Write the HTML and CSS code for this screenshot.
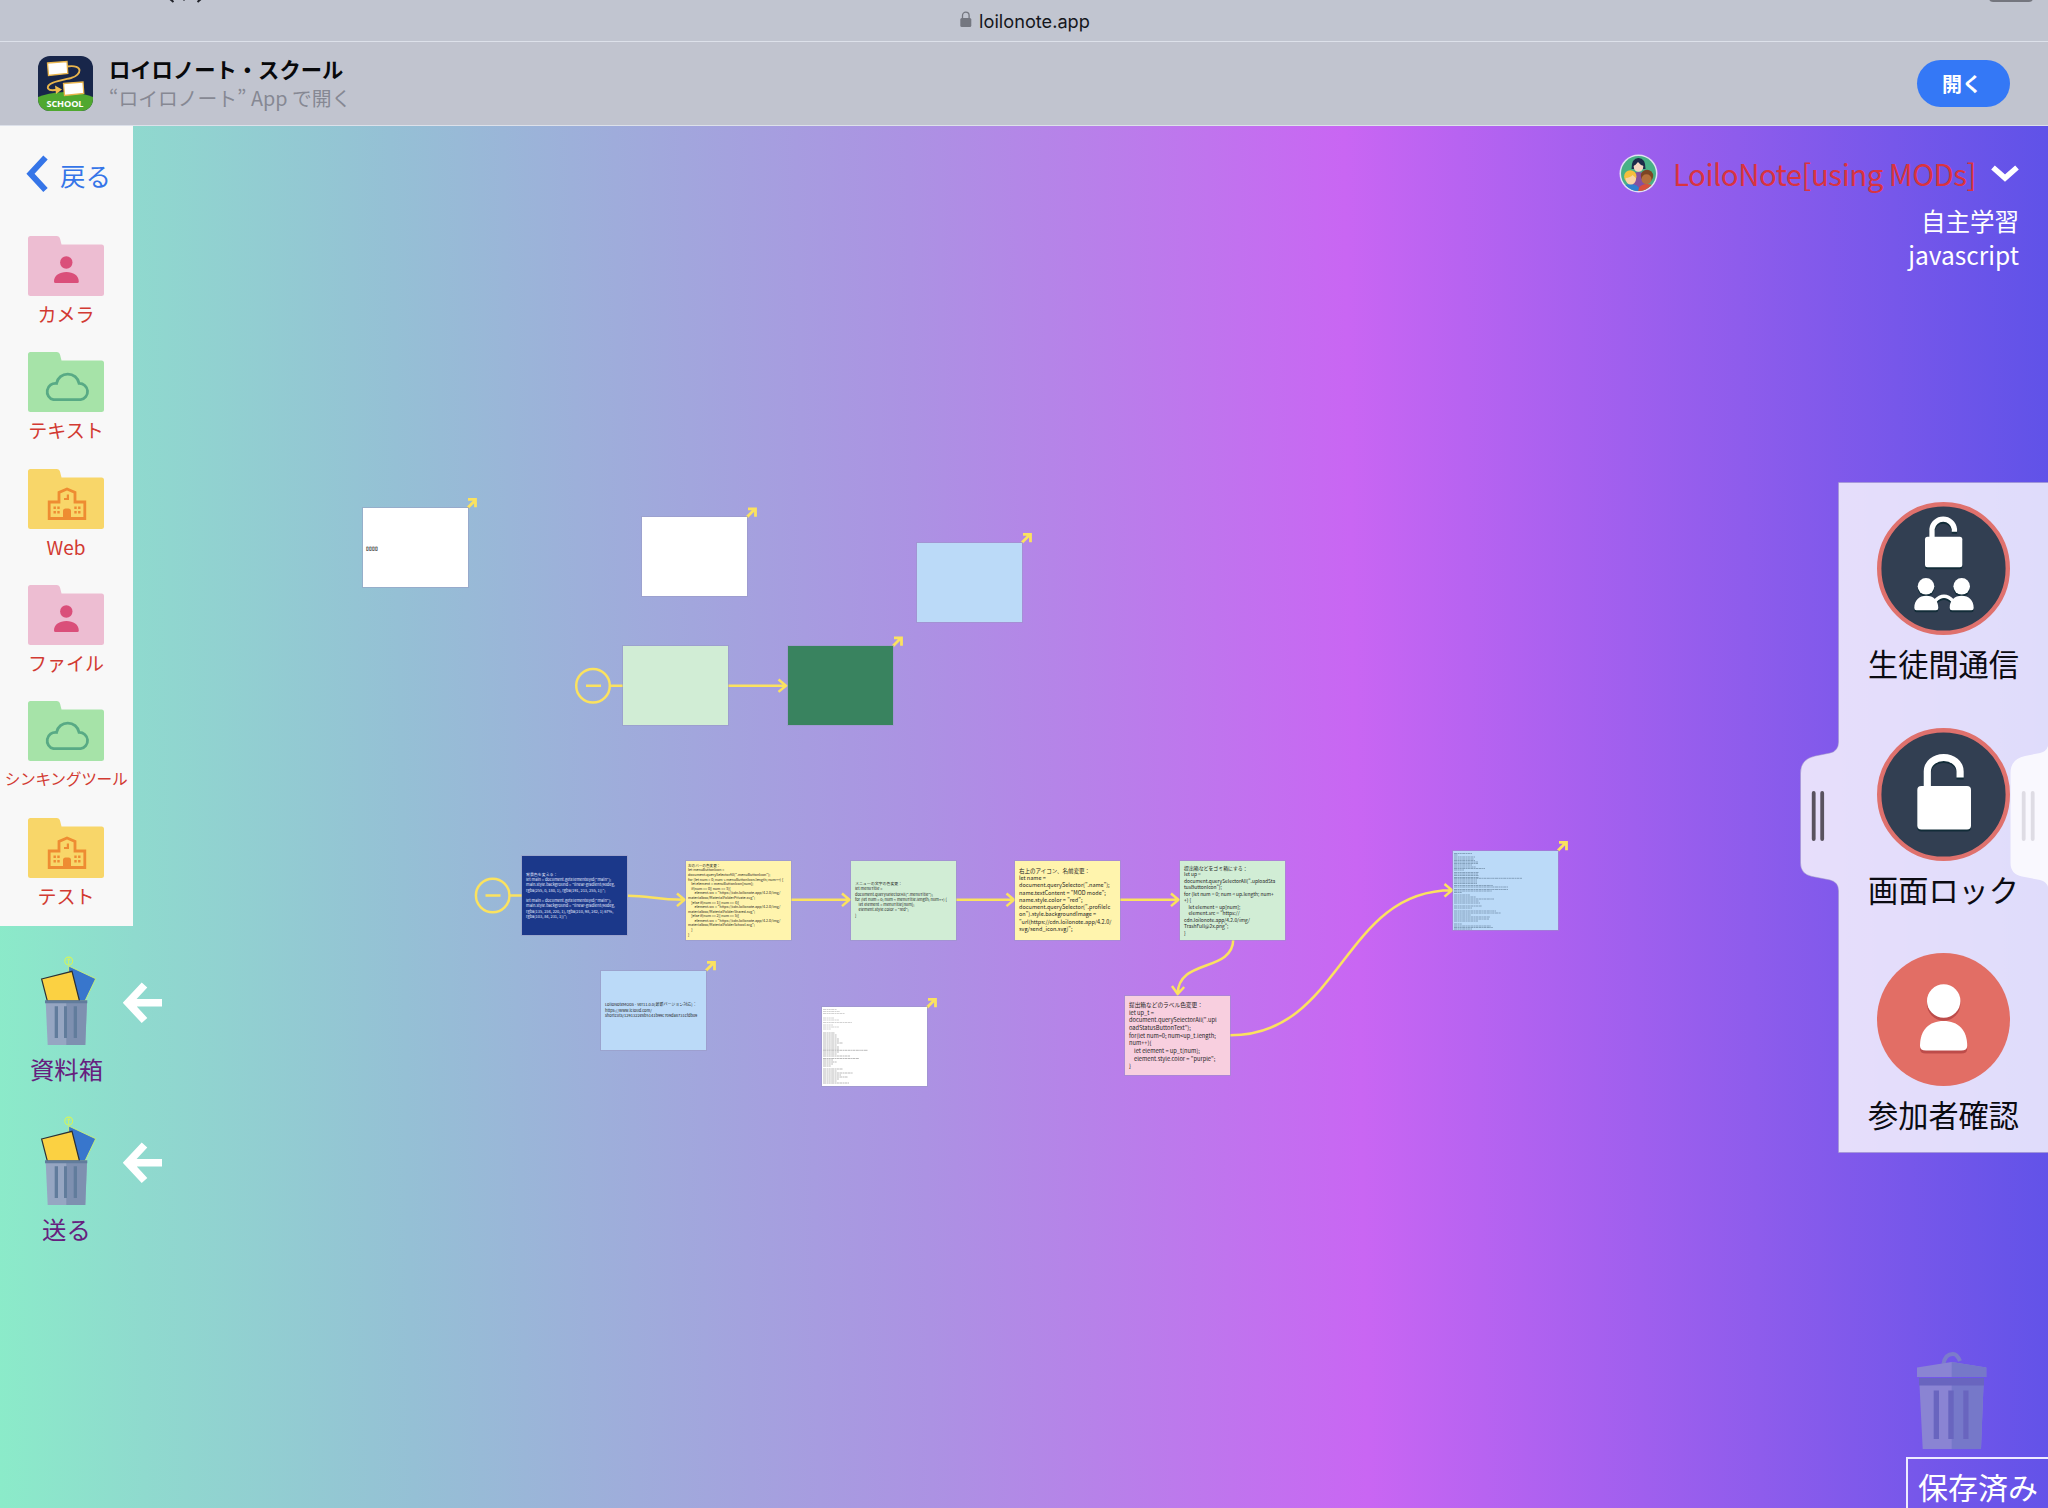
FILE: index.html
```html
<!DOCTYPE html>
<html lang="ja">
<head>
<meta charset="utf-8">
<title>ロイロノート・スクール</title>
<link rel="stylesheet" href="styles.css">
</head>
<body>
<svg class="defs" width="0" height="0">
  <symbol id="folder" viewBox="0 0 76 60"><path d="M2.500 0H29q2.500 0 3 2.500L33.500 8.500H73.500q2.500 0 2.500 2.500V57.500q0 2.500-2.500 2.500H2.500Q0 60 0 57.500V2.500Q0 0 2.500 0z"/></symbol>
  <symbol id="person" viewBox="0 0 76 60"><circle cx="38.300" cy="26.500" r="6.200"/><path d="M26 45.500c0-6 5.500-9.500 12.400-9.500s12.400 3.500 12.400 9.500q0 1.500-1.500 1.500h-21.800q-1.500 0-1.500-1.500z"/></symbol>
  <symbol id="cloud" viewBox="0 0 76 60"><path d="M25.500 47.700a8.300 8.300 0 0 1 3-16.300 11.500 11.500 0 0 1 22.600 0 8.200 8.200 0 0 1 1.500 16.300z" fill="none" stroke="#58aa85" stroke-width="2.800"/></symbol>
  <symbol id="school" viewBox="0 0 76 60"><path d="M21.200 49.500V33H31V23.500l8-3.500 8 3.500V33h9.800v16.500z" fill="none" stroke="#ee8c32" stroke-width="2.800"/><path d="M35 50v-8q0-2.500 2.500-2.500h3q2.500 0 2.500 2.500v8zM38.800 25.500h2.200v5.500h-5v-2h2.800zM25.500 37.500h2.400v2.400h-2.400zM29.300 37.500h2.400v2.400h-2.400zM25.500 42h2.400v2.400h-2.400zM29.300 42h2.400v2.400h-2.400zM46.300 37.500h2.400v2.400h-2.400zM50.100 37.500h2.400v2.400h-2.400zM46.300 42h2.400v2.400h-2.400zM50.100 42h2.400v2.400h-2.400z" fill="#ee8c32"/></symbol>
  <symbol id="bin" viewBox="0 0 58 90">
    <path d="M28.700 10L55.700 22.700 45 45H28z" fill="#3876cc" stroke="#c9f275" stroke-width=".9"/>
    <circle cx="28.700" cy="5" r="3.900" fill="none" stroke="#d2f55c" stroke-width="1.100"/><path d="M28.700 8V2.800M26.900 4.500l1.800-1.900 1.800 1.900" fill="none" stroke="#d2f55c"/>
    <path d="M1.600 23L32 15.300 39.500 45H7.300z" fill="#fbd142" stroke="#2a3036" stroke-width="1.200"/>
    <path d="M5.700 46H47L45.300 89H7.700z" fill="#96a6c2"/><path d="M26.300 46H47L45.300 89h-19z" fill="#7e90b0"/>
    <path d="M5 44.300h42.300v2.900H5zM14.700 50.300H18V82h-3.300zM24 50.300h3V82h-3zM33.700 50.300H37V82h-3.300z" fill="#617c9c"/>
  </symbol>
  <symbol id="back-arrow" viewBox="0 0 40 42"><path d="M5 20.700H39M21.500 3L5 20.700 21.500 38.500" fill="none" stroke="#fff" stroke-width="7.600"/></symbol>
</svg>

<header class="address-bar">
  <svg class="status-left" width="34" height="3" viewBox="0 0 34 3"><path d="M1 -1L4.500 2M15 -1v1.500M32 -1L28.500 2" fill="none" stroke="#22242a" stroke-width="2"/></svg>
  <span class="status-battery"></span>
  <svg width="12" height="17" viewBox="0 0 12 17"><rect x=".3" y="7" width="11" height="9" rx="1.500" fill="#747780"/><path d="M2.500 8V4.500a3.300 3.300 0 0 1 6.600 0V8" fill="none" stroke="#747780" stroke-width="1.300"/></svg>
  <span>loilonote.app</span>
</header>

<section class="app-banner">
  <svg class="app-icon" viewBox="0 0 55 55" width="55" height="55">
    <rect width="55" height="55" fill="#18264a"/>
    <ellipse cx="27.500" cy="58" rx="43" ry="22" fill="#4fa82f"/>
    <path d="M29 10.500C46 8 44 19 33 22 20 25 8 27 10 32.500q2 3 10 1" fill="none" stroke="#e9b54d" stroke-width="1.900"/>
    <path d="M17 29.500l7 4-6 4.500z" fill="#f2bd4d"/>
    <path d="M9.500 7L29 5.500 29.800 17.500 10.500 19.500zM25.500 27.500L45 26 45.800 37.500 26.500 39.500z" fill="#fff" stroke="#e9b54d" stroke-width="1.300"/>
    <text x="27" y="50.800" text-anchor="middle" class="icon-text" textLength="37">SCHOOL</text>
  </svg>
  <div class="app-info"><b>ロイロノート・スクール</b><span>“ロイロノート” App で開く</span></div>
  <button class="open">開く</button>
</section>

<main class="board">
  <div class="stage">
    <svg class="links" viewBox="0 126 2048 1382" width="2048" height="1382">
      <g class="wire">
        <circle cx="593" cy="685.700" r="16.800"/><path d="M586 685.700h15M610 685.700h13M728 685.700h58M778.500 679.500l7.500 6.200-7.500 6.200"/>
        <circle cx="492.700" cy="895.500" r="16.800"/><path d="M485.500 895.500h15M510 895.500h12M628 895.700C650 895.700 655 899.800 684 899.800M677 893.500l7.500 6.300-7.500 6.300"/>
        <path d="M791 899.800h58M842 893.500l7.500 6.300-7.500 6.300M956 899.800h58M1006.500 893.500l7.500 6.300-7.500 6.300M1120 899.800h58M1171 893.500l7.500 6.300-7.500 6.300"/>
        <path d="M1233.300 939C1233 973 1178 958 1177.700 994M1172 986l5.700 8 6.500-7"/>
        <path d="M1230 1035.300C1342 1035.300 1342 890.300 1452 890.300M1444.500 884l7.500 6.300-7.500 6.300"/>
      </g>
      <g class="wire out">
        <path d="M468 507.500l8-8M468 499.300h7.500v8"/><path d="M747 517l8-8M748 508.800h7.500v8"/><path d="M1022 542.500l8-8M1023 534.300h7.500v8"/><path d="M893 646l8-8M894 637.800h7.500v8"/><path d="M706 970.500l8-8M707 962.300h7.500v8"/><path d="M927 1007.500l8-8M928 999.300h7.500v8"/><path d="M1558 850.500l8-8M1559 842.300h7.500v8"/>
      </g>
    </svg>
    <article class="card n1"><pre>▯▯▯▯</pre></article>
    <article class="card n2"></article>
    <article class="card n3 sky"></article>
    <article class="card n4 mint"></article>
    <article class="card n5 forest"></article>
    <article class="card n6 navy"><pre>背景色を変える：
let main = document.getElementById("main");
main.style.background = "linear-gradient(90deg,
rgba(255, 0, 180, 1), rgba(191, 213, 255, 1))";

let main = document.getElementById("main");
main.style.background = "linear-gradient(90deg,
rgba(135, 234, 220, 1), rgba(210, 98, 242, 1) 67%,
rgba(103, 84, 231, 1))";</pre></article>
    <article class="card n7 lemon"><pre>左のバーの色変更：
let menuButtonIcon =
document.querySelectorAll(".menuButtonIcon");
for (let num = 0; num &lt; menuButtonIcon.length; num++) {
    let element = menuButtonIcon[num];
    if(num == 0|| num == 3){
        element.src = "https://cdn.loilonote.app/4.2.0/img/
materialbox/MaterialFolderPrivate.svg";
    }else if(num == 1|| num == 4){
        element.src = "https://cdn.loilonote.app/4.2.0/img/
materialbox/MaterialFolderShared.svg";
    }else if(num == 2|| num == 5){
        element.src = "https://cdn.loilonote.app/4.2.0/img/
materialbox/MaterialFolderSchool.svg";
    }
}</pre></article>
    <article class="card n8 mint"><pre>メニューの文字の色変更：
let menuTitle =
document.querySelectorAll(".menuTitle");
for (let num = 0; num &lt; menuTitle.length; num++) {
    let element = menuTitle[num];
    element.style.color = "red";
}</pre></article>
    <article class="card n9 lemon"><pre>右上のアイコン、名前変更：
let name =
document.querySelector(".name");
name.textContent = "MOD mode";
name.style.color = "red";
document.querySelector(".profileIc
on").style.backgroundImage =
"url(https://cdn.loilonote.app/4.2.0/
svg/send_icon.svg)";</pre></article>
    <article class="card n10 mint"><pre>提出箱などをゴミ箱にする：
let up =
document.querySelectorAll(".uploadSta
tusButtonIcon");
for (let num = 0; num &lt; up.length; num+
+) {
    let element = up[num];
    element.src = "https://
cdn.loilonote.app/4.2.0/img/
TrashFull@2x.png";
}</pre></article>
    <article class="card n11 rose"><pre>提出箱などのラベル色変更：
let up_t =
document.querySelectorAll(".upl
oadStatusButtonText");
for(let num=0; num&lt;up_t.length;
num++){
    let element = up_t[num];
    element.style.color = "purple";
}</pre></article>
    <article class="card n12 sky"><pre>LoiloNoteMODs - ver11.0.0(最新バージョン対応)：
https://www.icloud.com/
shortcuts/1291322e8b5141b99c709da8731cfdb09</pre></article>
    <article class="card n13"><svg viewBox="0 0 105 79" width="105" height="79"><g class="scribble"><path d="M1 2.500h14M1 4.500h17M1 6.500h22M1 11h11M1 13h16M1 15.500h29M1 18h10M1 20h16M1 22h8"/><path class="dense" d="M1 26h12M1 28h14M1 30h14M1 32h16M1 34h16M1 36h20M1 38h14M1 40h16M1 42h16M1 43.300h45M1 45h16M1 47h14M1 49h27M1 51.500h36M1 53h10M1 55h14M1 57h10M1 59h8M1 62h20M1 64h14M1 66h30M1 68h18M1 70h25M1 72h16M1 74h14M1 76h26"/></g></svg></article>
    <article class="card n14 sky"><svg viewBox="0 0 105 78" width="105" height="78"><g class="scribble blue"><path class="dense" d="M1 1.500h18M1 3h4M1 5h21M1 7h20M1 8.500h21M1 10h24M1 11.500h24M1 13h18M1 15h22M1 16.500h31M1 18h10M1 20.500h25M1 22h24M1 23.500h25M1 25.500h25M1 26.300h68M1 28h23M1 30h23M1 31.500h23M1 33.500h39M1 35h54M1 37.500h54M1 39h38M1 40.500h8M1 43h16M1 45h22M1 47h40M1 49h25M1 51h26"/><path class="dense" d="M1 54h28M1 56h18M1 59h42M1 61h47M1 63h17M1 65h36M1 67h35M1 69h24M1 72h8M1 74h37M1 75.500h39M1 77h18"/></g></svg></article>
  </div>

  <aside class="left">
    <nav class="menu">
      <a class="back"><svg width="22" height="38" viewBox="0 0 22 38"><path d="M19.500 2.500L4.500 18.700 19.500 35" fill="none" stroke="#3575e8" stroke-width="6"/></svg>戻る</a>
      <div class="item pink"><svg><use href="#folder"/><use href="#person" class="glyph"/></svg><span>カメラ</span></div>
      <div class="item green"><svg><use href="#folder"/><use href="#cloud"/></svg><span>テキスト</span></div>
      <div class="item amber"><svg><use href="#folder"/><use href="#school"/></svg><span>Web</span></div>
      <div class="item pink"><svg><use href="#folder"/><use href="#person" class="glyph"/></svg><span>ファイル</span></div>
      <div class="item green"><svg><use href="#folder"/><use href="#cloud"/></svg><span class="small">シンキングツール</span></div>
      <div class="item amber"><svg><use href="#folder"/><use href="#school"/></svg><span>テスト</span></div>
    </nav>
    <div class="drop"><div class="drop-main"><svg width="58" height="90"><use href="#bin"/></svg><span>資料箱</span></div><svg class="drop-arrow" width="40" height="42"><use href="#back-arrow"/></svg></div>
    <div class="drop"><div class="drop-main"><svg width="58" height="90"><use href="#bin"/></svg><span>送る</span></div><svg class="drop-arrow" width="40" height="42"><use href="#back-arrow"/></svg></div>
  </aside>

  <aside class="right">
    <div class="user">
      <svg width="39" height="39" viewBox="0 0 39 39">
        <clipPath id="face"><circle cx="19.500" cy="19.500" r="17.500"/></clipPath>
        <circle cx="19.500" cy="19.500" r="19" fill="#e3e0f5"/>
        <g clip-path="url(#face)"><rect width="39" height="39" fill="#47b086"/>
          <path d="M12 27q0-9 7.500-9t7.500 9v7H12z" fill="#8550a0"/><path d="M12.500 15q0-11 7-11t7 11z" fill="#1d2c4a"/><ellipse cx="19.500" cy="12.500" rx="4.800" ry="5.300" fill="#f6d6c0"/><path d="M14 12q3-1 5-4 2 3 6 4l-1-5q-5-5-9 0z" fill="#1d2c4a"/>
          <path d="M2 39q0-9 9.500-9t9.500 9z" fill="#2f7fd0"/><circle cx="11.300" cy="22.500" r="6.200" fill="#f6bf3c"/><ellipse cx="11.800" cy="25" rx="5.200" ry="5.500" fill="#f9d3a5"/><path d="M6.500 24q5-.5 7-3l3.500 3q0-6-5.500-6t-5 6z" fill="#f6bf3c"/>
          <path d="M19 39q0-9 9-9t9 9z" fill="#d8503c"/><circle cx="28" cy="22" r="6.200" fill="#7c4524"/><ellipse cx="27.500" cy="25.300" rx="5" ry="5" fill="#b5703c"/>
        </g>
      </svg>
      <span class="name">LoiloNote[using MODs]</span>
      <svg class="chev" width="28" height="17" viewBox="0 0 28 17"><path d="M2 2.500L14 13 26 2.500" fill="none" stroke="#fff" stroke-width="5.500"/></svg>
    </div>
    <p class="course">自主学習</p>
    <p class="note">javascript</p>

    <section class="panel">
      <svg class="panel-shape" width="248" height="671" viewBox="0 0 248 671">
        <path d="M38.500.5H250V670.500H38.500V409Q38.500 400 30 398L12 394.500Q.5 392 .5 381V291Q.5 277 15 274L30 271Q38.500 269 38.500 260z" fill="#fff" fill-opacity=".8" stroke="#9b93c4" stroke-opacity=".5"/>
        <path d="M13.700 311v46M22.200 311v46" stroke="#59535f" stroke-width="3.800" stroke-linecap="round"/>
      </svg>
      <div class="control"><svg width="133" height="133" viewBox="0 0 133 133">
        <circle cx="66.500" cy="66.500" r="64.300" class="disc"/>
        <g class="lift"><rect x="48" y="34.700" width="37.300" height="30.500" rx="2.500"/><path class="line" d="M55 36V27a11.300 11.300 0 0 1 22.400 0V29.700" stroke-width="5.300"/>
        <circle cx="49" cy="84.300" r="8.300"/><circle cx="84.700" cy="84.300" r="8.300"/><path d="M37.300 106c0-8 5-12.300 12-12.300s12 4.300 12 12.300q0 2.300-2.300 2.300H39.500q-2.200 0-2.200-2.300zM72.700 106c0-8 5-12.300 12-12.300s12 4.300 12 12.300q0 2.300-2.300 2.300H75q-2.300 0-2.300-2.300z"/><path class="line" d="M58 99q9-9.500 18 0" stroke-width="3.500"/></g>
      </svg><span>生徒間通信</span></div>
      <div class="control"><svg width="133" height="133" viewBox="0 0 133 133">
        <circle cx="66.500" cy="66.500" r="64.300" class="disc"/>
        <g class="lift"><rect x="40.300" y="58" width="53.700" height="43.500" rx="4"/><path class="line" d="M50.300 60V43.500a16.400 14 0 0 1 32.800 0V49.500" stroke-width="7.200"/></g>
      </svg><span>画面ロック</span></div>
      <div class="control"><svg width="133" height="133" viewBox="0 0 133 133">
        <circle cx="66.500" cy="66.500" r="66.500" fill="#e26e65"/>
        <g class="lift warm"><circle cx="66.700" cy="48" r="16.700"/><path d="M43 93c0-16 9-25 23.600-25s23.600 9 23.600 25q0 4.500-6 4.500H49q-6 0-6-4.500z"/></g>
      </svg><span>参加者確認</span></div>
      <svg class="panel-next" width="38" height="671" viewBox="0 0 38 671">
        <path d="M38.500 409Q38.500 400 30 398L12 394.500Q.5 392 .5 381V291Q.5 277 15 274L30 271Q38.500 269 38.500 260z" fill="#fff" fill-opacity=".8"/>
        <path d="M13.700 311v46M22.700 311v46" stroke="#dedce4" stroke-width="3.800" stroke-linecap="round"/>
      </svg>
    </section>

    <svg class="trash" width="70" height="97" viewBox="0 0 70 97">
      <path d="M26.500 12Q28 2 36 2q4 0 7 7" fill="none" stroke="#7c7bcb" stroke-width="4"/>
      <path d="M0 15.600L34.700 10 69.300 15.600V25H0zM2.500 33H66.500L64 97H5.700z" fill="#8a84d3"/>
      <path d="M34.700 10L69.300 15.600V25H34.700zM34.700 33H66.500L64 97H34.700z" fill="#7678c9"/>
      <path d="M2 26H67v7.500H2zM16.700 38.500H22V87h-5.300zM31.300 38.500h5.400V87h-5.400zM46.300 38.500h5.200V87h-5.200z" fill="#6965bf"/>
    </svg>
    <div class="saved">保存済み</div>
  </aside>
</main>
</body>
</html>
```

FILE: styles.css
```css
* { box-sizing: border-box; }

body {
  margin: 0;
  width: 2048px;
  height: 1508px;
  overflow: hidden;
  display: flex;
  flex-direction: column;
  font-family: "Noto Sans CJK JP", "Noto Sans", sans-serif;
}

.defs { position: absolute; }

/* browser chrome */
.address-bar {
  position: relative;
  flex: none;
  height: 42px;
  display: flex;
  justify-content: center;
  align-items: center;
  gap: 7px;
  padding-left: 2px;
  background: #c1c5d0;
  border-bottom: 1px solid #dde1ea;
  font: 18.2px/42px Inter, "Liberation Sans", sans-serif;
  color: #15171c;
}
.address-bar svg { margin-top: -2px; }
.address-bar .status-left { position: absolute; left: 169px; top: 0; margin: 0; }
.status-battery { position: absolute; left: 1989px; top: -10px; width: 44px; height: 12px; border-radius: 4px; background: #74767e; }

.app-banner {
  flex: none;
  height: 84px;
  display: flex;
  align-items: center;
  padding: 0 38px;
  background: #c1c4cf;
  border-bottom: 1px solid #dde1ea;
}
.app-icon { border-radius: 12px; }
.icon-text { font: bold 9.200px "Open Sans", sans-serif; fill: #fff; }
.app-info { display: flex; flex-direction: column; margin-left: 16px; flex: 1; white-space: nowrap; }
.app-info b { font-size: 21.300px; line-height: 28px; color: #08090b; }
.app-info span { font-size: 19.800px; line-height: 29px; color: #868893; }
.open {
  width: 93px;
  height: 47px;
  border: 0;
  border-radius: 24px;
  background: #3478f6;
  color: #fff;
  font: bold 20px "Noto Sans CJK JP", sans-serif;
  padding: 0 3px 1px 0;
}

/* board */
.board {
  position: relative;
  flex: 1;
  min-height: 0;
  display: flex;
  justify-content: space-between;
  background: linear-gradient(89deg, #8bebc9 0%, #8fdace 7%, #95c0d5 20%, #ac92e3 45%, #c966f3 66%, #8e5cec 85%, #5f52e8 100%);
}
.stage { position: absolute; inset: 0; }
.links { position: absolute; left: 0; top: 0; }
.wire { fill: none; stroke: #fbe25f; stroke-width: 2.500; }
.wire.out { stroke-width: 2.800; }

.card {
  position: absolute;
  width: 105px;
  height: 79px;
  background: #fff;
  box-shadow: 0 0 0 1px rgba(150, 150, 190, .45);
  display: flex;
  align-items: center;
  overflow: hidden;
}
.card pre { margin: 0; padding-left: 3px; font-family: "Noto Sans CJK JP", sans-serif; color: #222; }
.sky { background: #bbdaf8; }
.mint { background: #d1edd5; }
.forest { background: #39835f; }
.navy { background: #1b388a; }
.lemon { background: #fff4ad; }
.rose { background: #f8cfdf; }

.n1 { left: 363px; top: 382px; }
.n2 { left: 642px; top: 391px; }
.n3 { left: 917px; top: 417px; }
.n4 { left: 623px; top: 520px; }
.n5 { left: 788px; top: 520px; }
.n6 { left: 522px; top: 730px; }
.n7 { left: 686px; top: 735px; }
.n8 { left: 851px; top: 735px; }
.n9 { left: 1015px; top: 735px; }
.n10 { left: 1180px; top: 735px; }
.n11 { left: 1125px; top: 870px; }
.n12 { left: 601px; top: 845px; }
.n13 { left: 822px; top: 881px; }
.n14 { left: 1453px; top: 725px; }
.n1 pre { font-size: 5px; font-weight: bold; color: #000; }
.n6 pre { font-size: 3.950px; line-height: 5.300px; padding: 0 0 0 4px; color: #e8edff; }
.n7 pre { font-size: 3.600px; line-height: 4.580px; padding-left: 2px; }
.n8 pre { font-size: 3.950px; line-height: 5.330px; padding: 0 0 2px 4px; }
.n9 pre { font-size: 5.500px; line-height: 7.230px; padding-left: 4px; }
.n10 pre { font-size: 4.900px; line-height: 6.530px; padding-left: 4px; }
.n11 pre { font-size: 5.700px; line-height: 7.680px; padding-left: 4px; }
.n12 pre { font-size: 4px; line-height: 5.500px; padding-left: 4px; }
.scribble { fill: none; stroke: #c6c6c6; stroke-width: .8; stroke-dasharray: 3 .5 1.500 .4 2.300 .5; }
.scribble .dense { stroke: #aaa; }
.scribble.blue .dense { stroke: #7793ad; }

/* left column */
.left { position: relative; width: 170px; }
.menu {
  width: 133px;
  height: 800px;
  background: #f8f8f8;
  display: flex;
  flex-direction: column;
}
.back {
  flex: none;
  height: 110px;
  padding: 0 0 14px 26px;
  display: flex;
  align-items: center;
  gap: 12px;
  color: #3575e8;
  font-size: 25.500px;
  white-space: nowrap;
}
.item {
  flex: none;
  height: 116.350px;
  padding-right: 1px;
  display: flex;
  flex-direction: column;
  align-items: center;
  color: #d23a32;
  font-size: 19px;
  line-height: 28px;
  white-space: nowrap;
}
.item svg { width: 76px; height: 60px; margin-bottom: 4px; flex: none; }
.item .small { font-size: 15.700px; letter-spacing: -.3px; }
.pink svg { fill: #edbdd2; }
.pink .glyph { fill: #da4f7a; }
.green svg { fill: #a6e3a8; }
.amber svg { fill: #f8d669; }

.drop { height: 159.500px; padding-top: 30px; display: flex; align-items: flex-start; }
.drop-main { width: 133px; display: flex; flex-direction: column; align-items: center; color: #66207e; font-size: 24.400px; line-height: 34px; }
.drop-main svg { margin: 0 0 6px 5px; }
.drop-arrow { margin: 26px 0 0 -10px; flex: none; }

/* right column */
.right { position: relative; width: 448px; display: flex; flex-direction: column; align-items: flex-end; }
.user { display: flex; align-items: center; height: 39px; margin: 28px 29px 0 0; }
.name { width: 301px; margin-left: 15px; font-size: 29.500px; letter-spacing: -.55px; line-height: 39px; color: #d9343f; white-space: nowrap; }
.chev { margin-left: 17px; }
.course, .note { margin: 0 29px 0 0; color: #fff; font-size: 24.500px; line-height: 34px; }
.course { margin-top: 11px; }

.panel { position: relative; width: 210px; height: 671px; margin-top: 210px; padding: 20px 0 0 1px; display: flex; flex-direction: column; align-items: center; }
.panel-shape { position: absolute; left: -38px; top: 0; }
.panel-next { position: absolute; right: 0; top: 0; }
.control { position: relative; height: 225.700px; flex: none; display: flex; flex-direction: column; align-items: center; font-size: 30.200px; line-height: 44px; color: #0b0b12; white-space: nowrap; }
.control svg { margin-bottom: 6px; flex: none; }
.disc { fill: #323f52; stroke: #df716d; stroke-width: 4.400; }
.lift { fill: #fff; filter: drop-shadow(0 2px 0 #122c38); }
.lift.warm { filter: drop-shadow(0 3px 0 #bd4c4a); }
.line { fill: none; stroke: #fff; }

.trash { margin: 199px 61px 0 0; flex: none; }
.saved {
  flex: none;
  width: 142px;
  height: 51px;
  margin-top: 8px;
  padding-left: 10px;
  border: 2px solid #eeebff;
  border-right: 0;
  border-bottom: 0;
  color: #fff;
  font-size: 30px;
  line-height: 54px;
  white-space: nowrap;
}
```
